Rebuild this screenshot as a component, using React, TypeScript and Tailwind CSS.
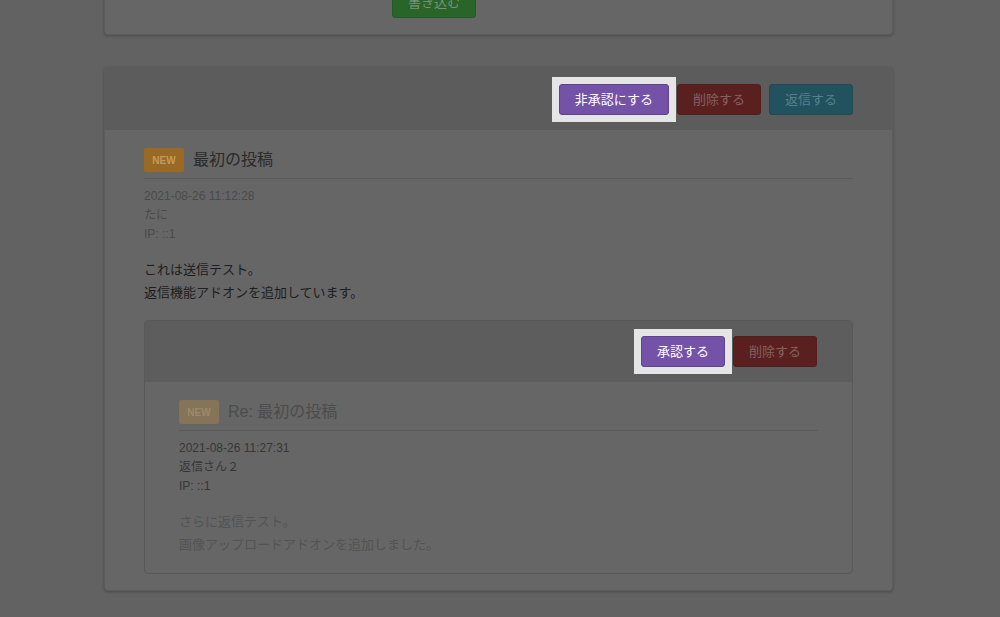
const font = { fontFamily: '"Liberation Sans", "Noto Sans CJK JP", sans-serif' };

type BtnProps = { label: string; tone: 'purple' | 'red' | 'teal' | 'green'; spot?: boolean };

const tones: Record<BtnProps['tone'], string> = {
  purple: 'bg-[#7352a8] border-[#5f4290] text-white',
  red: 'bg-[#5a2020] border-[#531d1d] text-[#846060]',
  teal: 'bg-[#22525e] border-[#1f4b56] text-[#54808a]',
  green: 'bg-[#296428] border-[#245a24] text-[#789278]',
};

// ボタン（spot=true でハイライト枠付き）
const Btn = ({ label, tone, spot }: BtnProps) => {
  const button = (
    <button className={`h-[31px] px-[15px] rounded-[3px] border text-[13px] leading-none ${tones[tone]}`}>
      {label}
    </button>
  );
  if (!spot) return button;
  return <div className="bg-[#e5e5e5] p-[7px] -m-[7px]">{button}</div>;
};

type PostProps = {
  title: string;
  date: string;
  name: string;
  lines: string[];
  reply?: boolean;
};

// 投稿本文
const PostBody = ({ title, date, name, lines, reply }: PostProps) => (
  <div>
    <div className="flex items-center gap-[9px] pb-[6px] border-b border-[#5b5b5b]">
      <span
        className={`w-10 h-6 rounded-[2px] flex items-center justify-center text-[10px] font-bold ${
          reply ? 'bg-[#857457] text-[#9b8a6e]' : 'bg-[#9a6a24] text-[#c29a60]'
        }`}
      >
        NEW
      </span>
      <h3 className={`text-[16px] leading-6 ${reply ? 'text-[#4c4c4c]' : 'text-[#2a2a2a]'}`}>{title}</h3>
    </div>
    <div className={`mt-[8px] text-[12px] ${reply ? 'text-[#363636]' : 'text-[#4a4a4a]'}`}>
      {[date, name, 'IP: ::1'].map((l) => (
        <p key={l} className="h-[19px] leading-[19px]">
          {l}
        </p>
      ))}
    </div>
    <div className={`mt-[14px] text-[13px] ${reply ? 'text-[#535353]' : 'text-[#1e1e1e]'}`}>
      {lines.map((l) => (
        <p key={l} className="h-[23px] leading-[23px]">
          {l}
        </p>
      ))}
    </div>
  </div>
);

export default function App() {
  return (
    <div className="min-h-[617px] bg-[#626262] overflow-hidden pb-10" style={font}>
      <div className="ml-[104px] w-[789px] -mt-[30px]">
        {/* 書き込みフォーム（上部） */}
        <div className="bg-[#666666] border border-[#5c5c5c] rounded-[4px] shadow-[0_1px_3px_rgba(0,0,0,0.25)] px-10 py-4">
          <div className="ml-[247px]">
            <Btn label="書き込む" tone="green" />
          </div>
        </div>

        {/* 投稿カード */}
        <div className="mt-[32px] bg-[#666666] border border-[#5c5c5c] rounded-[4px] shadow-[0_1px_3px_rgba(0,0,0,0.25)] overflow-hidden">
          <div className="bg-[#5c5c5c] h-[62px] pl-10 pr-[39px] flex items-center justify-end gap-2">
            <Btn label="非承認にする" tone="purple" spot />
            <Btn label="削除する" tone="red" />
            <Btn label="返信する" tone="teal" />
          </div>
          <div className="px-[39px] pt-[18px] pb-[16px]">
            <PostBody
              title="最初の投稿"
              date="2021-08-26 11:12:28"
              name="たに"
              lines={['これは送信テスト。', '返信機能アドオンを追加しています。']}
            />

            {/* 返信 */}
            <div className="mt-4 border border-[#585858] rounded-[4px] overflow-hidden">
              <div className="bg-[#5d5d5d] h-[61px] px-[35px] flex items-center justify-end gap-2">
                <Btn label="承認する" tone="purple" spot />
                <Btn label="削除する" tone="red" />
              </div>
              <div className="px-[34px] pt-[18px] pb-[17px]">
                <PostBody
                  reply
                  title="Re: 最初の投稿"
                  date="2021-08-26 11:27:31"
                  name="返信さん２"
                  lines={['さらに返信テスト。', '画像アップロードアドオンを追加しました。']}
                />
              </div>
            </div>
          </div>
        </div>
      </div>
    </div>
  );
}
